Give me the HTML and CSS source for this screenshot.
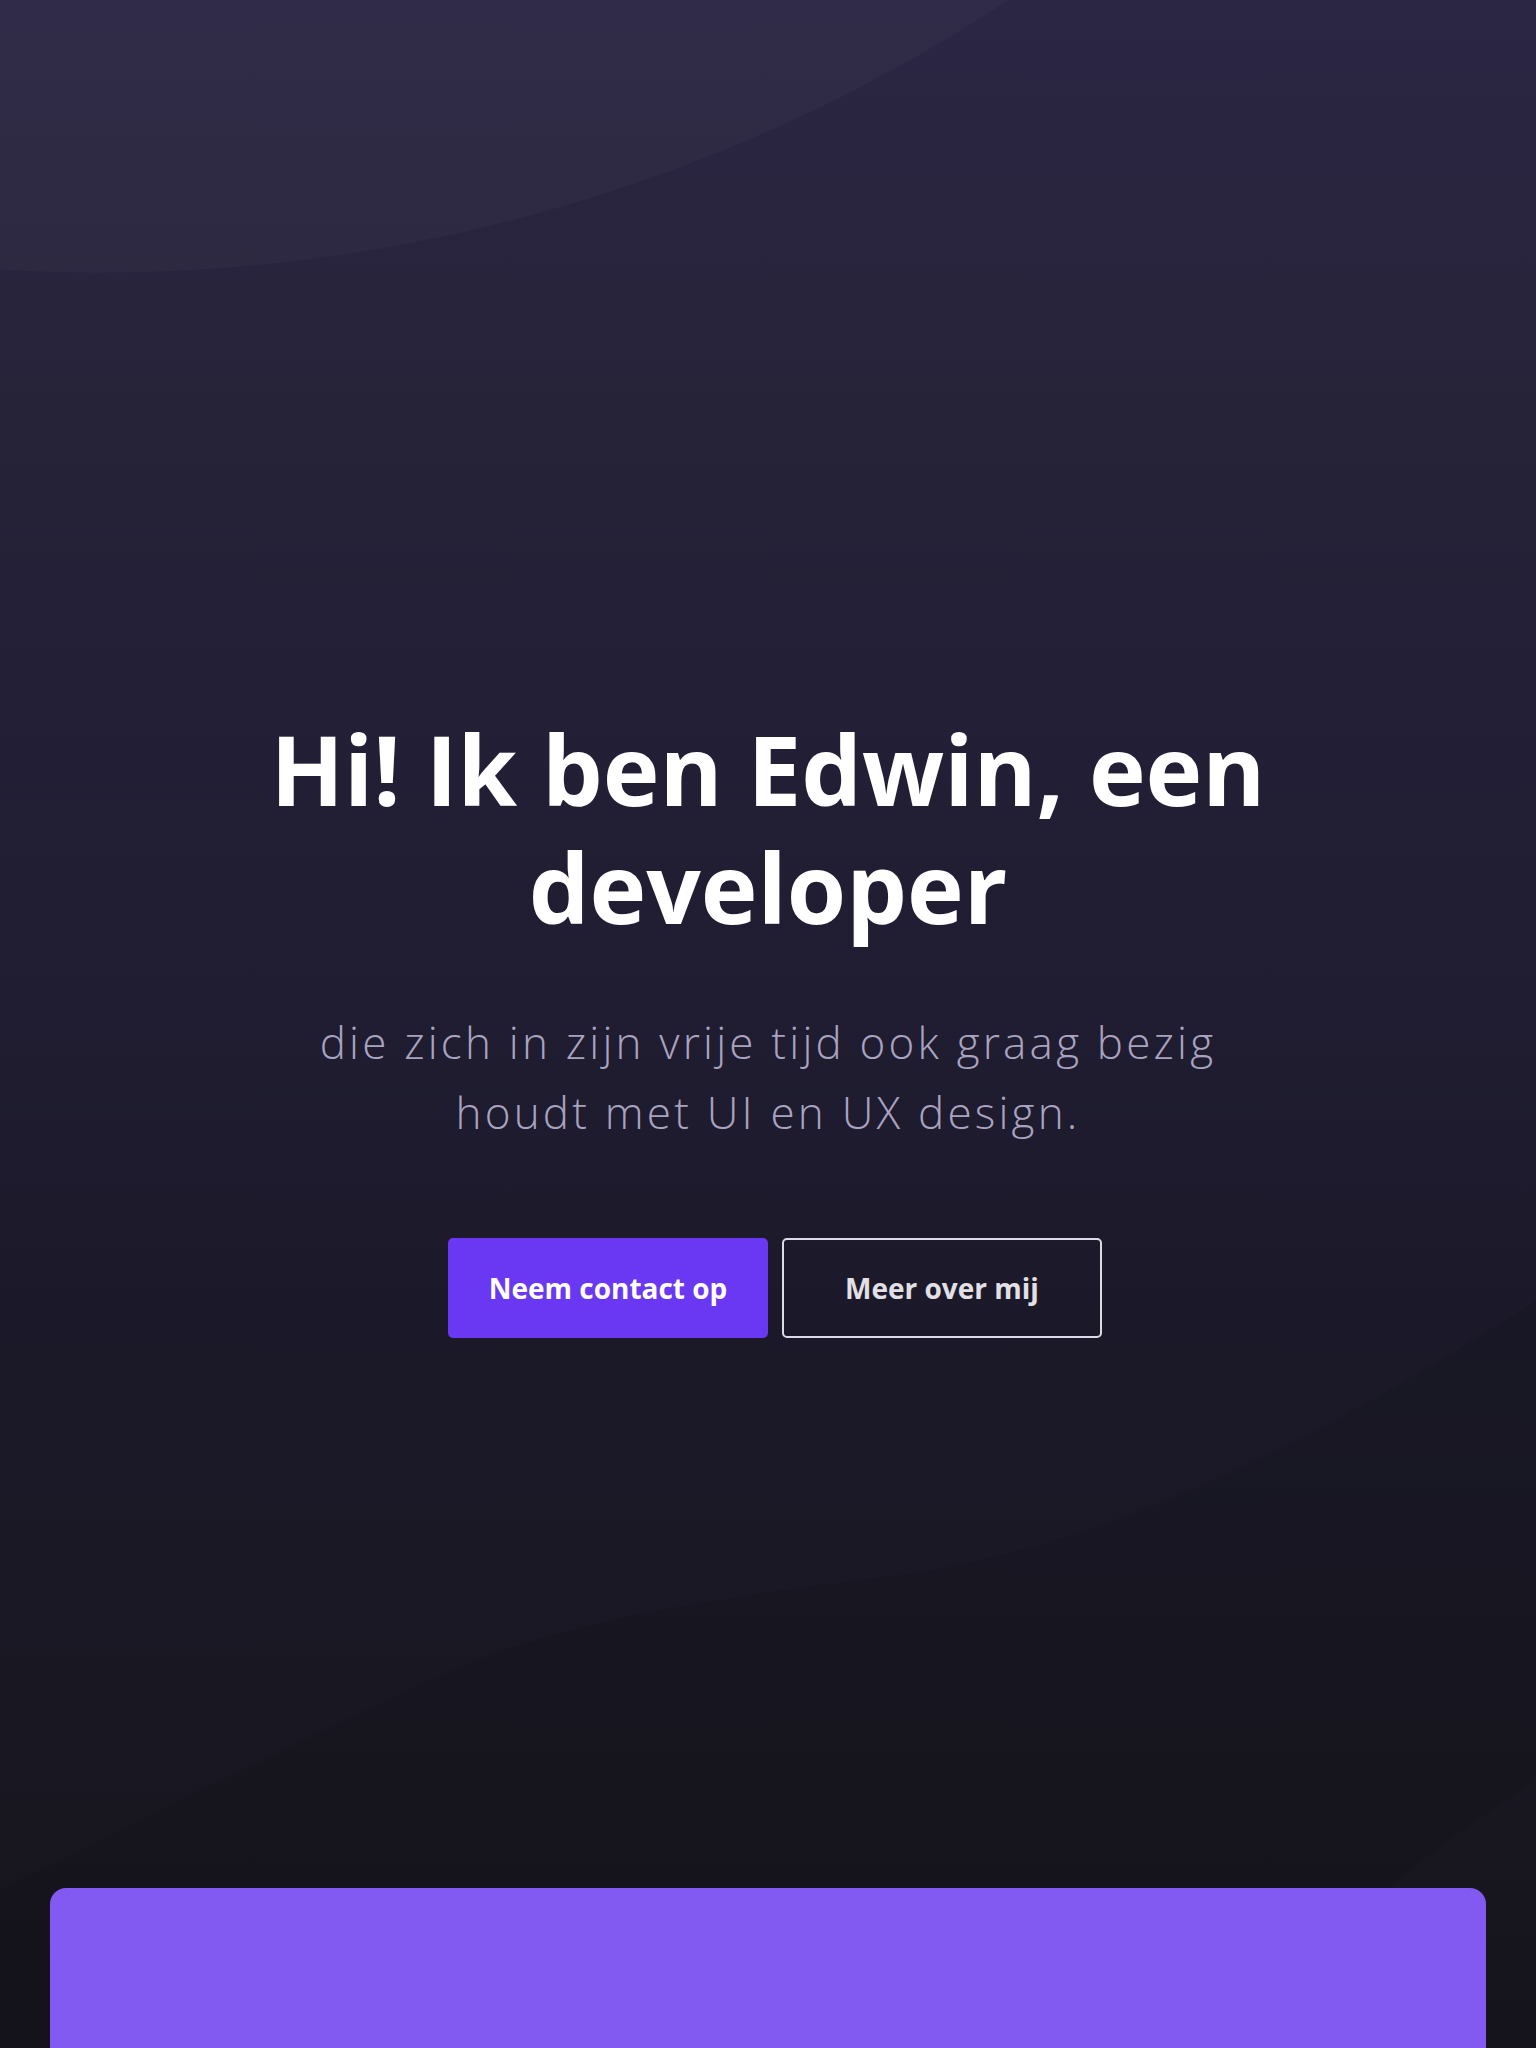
FILE: index.html
```html
<!DOCTYPE html>
<html lang="nl">
<head>
<meta charset="utf-8">
<title>Edwin — developer</title>
<link rel="stylesheet" href="styles.css">
</head>
<body>
<div class="page">
  <svg class="bg-shapes" viewBox="0 0 1536 2048" width="1536" height="2048" aria-hidden="true">
    <path class="wave" d="M0 1890 C120 1830 280 1750 430 1680 C560 1620 700 1600 900 1575 C1150 1540 1380 1400 1536 1300 L1536 1780 C1480 1820 1430 1850 1391 1887 C1340 1940 1300 2000 1270 2048 L0 2048 Z"/>
  </svg>
  <section class="hero">
    <h1 class="hero-title">Hi! Ik ben Edwin, een developer</h1>
    <p class="hero-sub">die zich in zijn vrije tijd ook graag bezig houdt met UI en UX design.</p>
    <div class="hero-actions">
      <a class="btn btn-primary" href="#contact">Neem contact op</a>
      <a class="btn btn-outline" href="#over">Meer over mij</a>
    </div>
  </section>
  <section class="card"></section>
</div>
</body>
</html>
```
FILE: styles.css
```css
* { box-sizing: border-box; }
html, body { margin: 0; padding: 0; }
body {
  font-family: "Open Sans", "Lato", "Noto Sans", sans-serif;
  background: #15131c;
}
.page {
  position: relative;
  overflow: hidden;
  background:
    radial-gradient(circle 1650px at 100px -1377px, rgba(255,255,255,0.025) 1649px, rgba(255,255,255,0) 1650px),
    linear-gradient(180deg, #2b2644 0px, #262339 400px, #221f36 720px, #201d32 1000px, #1c1a2b 1230px, #18161f 1840px, #15131c 2048px, #15131c 2400px);
}
.bg-shapes {
  position: absolute;
  top: 0;
  left: 0;
  pointer-events: none;
}
.wave { fill: rgba(0,0,0,0.08); }
.hero {
  position: relative;
  display: flex;
  flex-direction: column;
  align-items: center;
  padding: 710px 0 550px;
}
.hero-title {
  margin: 0;
  width: 1100px;
  text-align: center;
  color: #ffffff;
  font-weight: 700;
  font-size: 96px;
  line-height: 118px;
}
.hero-sub {
  margin: 61px 0 0;
  width: 1000px;
  text-align: center;
  color: #a9a3c0;
  font-weight: 300;
  font-size: 44px;
  line-height: 70px;
  letter-spacing: 3.2px;
}
.hero-actions {
  display: flex;
  gap: 14px;
  margin-top: 91px;
  padding-left: 14px;
}
.btn {
  display: flex;
  align-items: center;
  justify-content: center;
  width: 320px;
  height: 100px;
  border-radius: 5px;
  font-weight: 700;
  font-size: 28px;
  text-decoration: none;
}
.btn-primary {
  background: #6a38f2;
  color: #ffffff;
}
.btn-outline {
  border: 2px solid #dcdae2;
  color: #e2e0e6;
}
.card {
  position: relative;
  margin: 0 50px;
  height: 420px;
  background: #825af2;
  border-radius: 16px 16px 0 0;
}
```
